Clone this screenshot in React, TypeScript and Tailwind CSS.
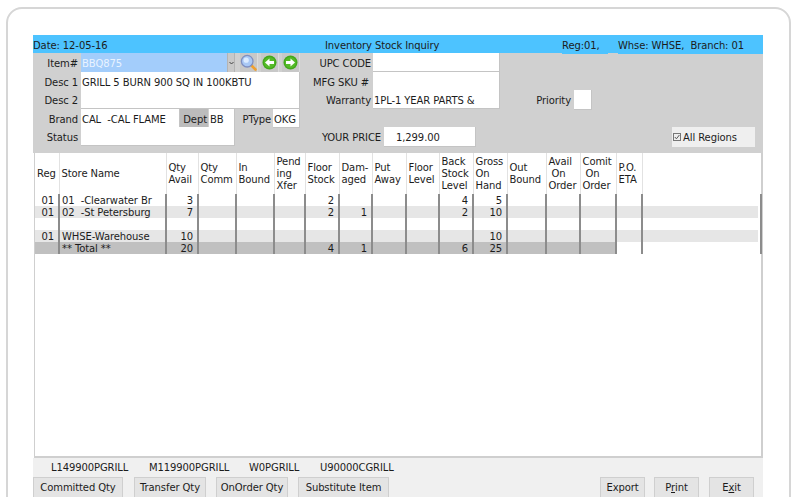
const cols = [24, 107, 32, 38, 38, 31, 34, 33, 34, 33, 34, 34, 39, 34, 36, 26];

const headers = [
  ["Reg"],
  ["Store Name"],
  ["Qty", "Avail"],
  ["Qty", "Comm"],
  ["In", "Bound"],
  ["Pend", "ing", "Xfer"],
  ["Floor", "Stock"],
  ["Dam-", "aged"],
  ["Put", "Away"],
  ["Floor", "Level"],
  ["Back", "Stock", "Level"],
  ["Gross", "On", "Hand"],
  ["Out", "Bound"],
  ["Avail", "\u00a0On", "Order"],
  ["Comit", "\u00a0On", "Order"],
  ["P.O.", "ETA"],
];

const rows = [
  { cells: ["01", "01  -Clearwater Br", "3", "", "", "", "2", "", "", "", "4", "5", "", "", "", ""], tone: "" },
  { cells: ["01", "02  -St Petersburg", "7", "", "", "", "2", "1", "", "", "2", "10", "", "", "", ""], tone: "bg-[#e6e6e6]" },
  { cells: ["", "", "", "", "", "", "", "", "", "", "", "", "", "", "", ""], tone: "" },
  { cells: ["01", "WHSE-Warehouse", "10", "", "", "", "", "", "", "", "", "10", "", "", "", ""], tone: "bg-[#e6e6e6]" },
  { cells: ["", "** Total **", "20", "", "", "", "4", "1", "", "", "6", "25", "", "", "", ""], tone: "bg-[#c0c0c0]", total: true },
];

function Field({ className = "", children }: { className?: string; children?: React.ReactNode }) {
  return (
    <div className={`h-[19px] bg-white border-b border-r border-[#c4c4c4] pl-[1px] leading-[21px] whitespace-pre ${className}`}>
      {children}
    </div>
  );
}

function Label({ className = "", children }: { className?: string; children: React.ReactNode }) {
  return <div className={`text-right leading-[21px] shrink-0 ${className}`}>{children}</div>;
}

function Btn({ className = "", children }: { className?: string; children: React.ReactNode }) {
  return (
    <div className={`h-[22px] bg-[#e4e4e4] border border-[#cfcfcf] border-b-0 text-center leading-[19px] shrink-0 ${className}`}>
      {children}
    </div>
  );
}

function IconBtn({ children }: { children: React.ReactNode }) {
  return (
    <div className="w-[18px] h-[19px] bg-[#c8c8c8] border-r border-[#dcdcdc] flex items-center justify-center shrink-0">
      {children}
    </div>
  );
}

function Arrow({ dir }: { dir: "left" | "right" }) {
  return (
    <svg width="15" height="15" viewBox="0 0 15 15">
      <circle cx="7.5" cy="7.5" r="7" fill="#43a81c" />
      <circle cx="7.5" cy="7.5" r="5.5" fill="#55bb28" />
      <path
        d={dir === "left" ? "M3 7.5 7.5 3.5V6H12V9H7.5V11.5Z" : "M12 7.5 7.5 3.5V6H3V9H7.5V11.5Z"}
        fill="#fff"
      />
    </svg>
  );
}

export default function App() {
  return (
    <div className="w-[800px] h-[497px] overflow-hidden bg-white pt-[7px] pl-[6px] text-[#1c1c1c] text-[10px] tracking-[-0.1px] font-['DejaVu_Sans',sans-serif]">
      <div className="w-[785px] h-[530px] border-2 border-[#d6d6d6] rounded-[16px] pt-[26px] pl-[25px]">
        <div className="w-[730px]">
          <div className="h-[18px] bg-[#4dc3ff] flex leading-[21px]">
            <div className="w-[292px] shrink-0">Date: 12-05-16</div>
            <div className="w-[237px] shrink-0">Inventory Stock Inquiry</div>
            <div className="w-[46px] h-[19px] bg-[#4dc3ff] relative shrink-0">Reg:01,</div>
            <div className="w-[10px] shrink-0" />
            <div className="flex-1 h-[19px] bg-[#4dc3ff] relative whitespace-pre">Whse: WHSE,  Branch: 01</div>
          </div>

          <div className="h-[100px] bg-[#d0d0d0]">
            <div className="flex h-[19px]">
              <Label className="w-[45px] mr-[3px]">Item#</Label>
              <div className="w-[154px] h-[19px] flex shrink-0">
                <div className="flex-1 bg-[#a3cdfb] text-[#e9f3ff] pl-[1px] leading-[21px]">BBQ875</div>
                <div className="w-[8px] bg-[#c9c9c9] border-l border-r border-[#b4b4b4] flex items-center justify-center">
                  <svg width="5" height="4" viewBox="0 0 5 4">
                    <path d="M.5 1 2.5 3 4.5 1" fill="none" stroke="#444" />
                  </svg>
                </div>
              </div>
              <div className="flex gap-[3px] w-[60px] ml-[5px] shrink-0">
                <IconBtn>
                  <svg width="17" height="17" viewBox="0 0 17 17">
                    <path d="M11 11 15.5 15.5" stroke="#f0a030" strokeWidth="2.6" strokeLinecap="round" />
                    <circle cx="7.2" cy="7.2" r="5.8" fill="#a9c8f5" stroke="#7f8fc0" strokeWidth="1.3" />
                    <circle cx="6.2" cy="6.2" r="2.6" fill="#dcebff" />
                  </svg>
                </IconBtn>
                <IconBtn>
                  <Arrow dir="left" />
                </IconBtn>
                <IconBtn>
                  <Arrow dir="right" />
                </IconBtn>
              </div>
              <Label className="w-[71px] mr-[2px]">UPC CODE</Label>
              <Field className="w-[127px]" />
            </div>

            <div className="flex h-[18px]">
              <Label className="w-[45px] mr-[3px]">Desc 1</Label>
              <Field className="w-[219px] shrink-0">GRILL 5 BURN 900 SQ IN 100KBTU</Field>
              <Label className="w-[69px] mr-[4px]">MFG SKU #</Label>
              <Field className="w-[127px]" />
            </div>

            <div className="flex h-[19px]">
              <Label className="w-[45px] mr-[3px]">Desc 2</Label>
              <Field className="w-[219px] shrink-0" />
              <Label className="w-[71px] mr-[2px]">Warranty</Label>
              <Field className="w-[127px] shrink-0">1PL-1 YEAR PARTS &</Field>
              <Label className="w-[71px] mr-[3px]">Priority</Label>
              <Field className="w-[18px] h-[20px]" />
            </div>

            <div className="flex h-[18px]">
              <Label className="w-[45px] mr-[3px]">Brand</Label>
              <Field className="w-[99px] shrink-0">CAL  -CAL FLAME</Field>
              <Label className="w-[28px] mr-[1px] bg-[#bcbcbc] pr-[1px]">Dept</Label>
              <Field className="w-[26px] shrink-0">BB</Field>
              <Label className="w-[36px] mr-[2px]">PType</Label>
              <Field className="w-[27px] shrink-0">OKG</Field>
            </div>

            <div className="flex h-[20px] items-start">
              <Label className="w-[45px] mr-[3px]">Status</Label>
              <Field className="w-[154px] h-[19px] shrink-0" />
              <Label className="w-[146px] mr-[3px]">YOUR PRICE</Label>
              <Field className="w-[92px] h-[20px] shrink-0 pl-[12px]">1,299.00</Field>
              <div className="w-[196px] shrink-0" />
              <div className="w-[83px] h-[20px] bg-[#efefef] flex items-center pl-[1px] gap-[2px] shrink-0">
                <svg width="8" height="8" viewBox="0 0 8 8">
                  <rect x=".5" y=".5" width="7" height="7" fill="#eee" stroke="#777" />
                  <path d="M1.8 4 3.4 5.8 6.4 2" fill="none" stroke="#555" />
                </svg>
                <span>All Regions</span>
              </div>
            </div>
          </div>

          <div className="w-[729px] h-[305px] ml-[1px] bg-white border-2 border-t-0 border-[#cfcfcf] border-l-[1px]">
            <table className="table-fixed border-collapse w-[727px]">
              <colgroup>
                {cols.map((w, i) => (
                  <col key={i} style={{ width: w }} />
                ))}
                <col />
              </colgroup>
              <thead>
                <tr className="h-[41px]">
                  {headers.map((lines, i) => (
                    <th
                      key={i}
                      className="font-normal text-left align-middle pl-[2px] leading-[12px] border-r border-[#e2e2e2]"
                    >
                      {lines.map((l, j) => (
                        <div key={j} className="whitespace-pre">
                          {l}
                        </div>
                      ))}
                    </th>
                  ))}
                  <th />
                </tr>
              </thead>
              <tbody>
                {rows.map((row, r) => (
                  <tr key={r} className="h-[12px]">
                    {row.cells.map((c, i) => (
                      <td
                        key={i}
                        className={`p-0 h-[12px] whitespace-pre border-r-2 border-[#8c8c8c] ${
                          row.total && i === 15 ? "" : row.tone
                        } ${i === 1 ? "text-left pl-[2px]" : "text-right pr-[4px]"}`}
                      >
                        <div className="h-[12px] leading-[14px]">{c}</div>
                      </td>
                    ))}
                    <td className="p-0 h-[12px] border-r-2 border-[#8c8c8c]">
                      {!row.total && <div className={`h-[12px] mr-[2px] ${row.tone}`} />}
                    </td>
                  </tr>
                ))}
              </tbody>
            </table>
          </div>

          <div className="h-[40px] bg-[#f0f0f0]">
            <div className="h-[19px] flex leading-[20px]">
              <div className="w-[116px] pl-[18px] shrink-0">L149900PGRILL</div>
              <div className="w-[100px] shrink-0">M119900PGRILL</div>
              <div className="w-[71px] shrink-0">W0PGRILL</div>
              <div>U90000CGRILL</div>
            </div>
            <div className="flex">
              <Btn className="w-[90px]">Committed Qty</Btn>
              <Btn className="w-[72px] ml-[11px]">Transfer Qty</Btn>
              <Btn className="w-[72px] ml-[10px]">OnOrder Qty</Btn>
              <Btn className="w-[91px] ml-[10px]">Substitute Item</Btn>
              <Btn className="w-[45px] ml-[211px]">Export</Btn>
              <Btn className="w-[45px] ml-[9px]">
                P<span className="underline">r</span>int
              </Btn>
              <Btn className="w-[45px] ml-[10px]">
                E<span className="underline">x</span>it
              </Btn>
            </div>
          </div>
        </div>
      </div>
    </div>
  );
}
